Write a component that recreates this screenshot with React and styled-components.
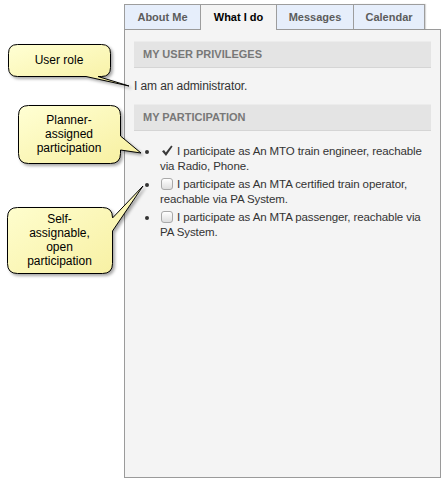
import React from 'react';
import styled, { createGlobalStyle } from 'styled-components';

const Global = createGlobalStyle`
  html, body { margin: 0; padding: 0; background: #fff; }
  body { font-family: "Liberation Sans", Arial, sans-serif; }
`;

const Page = styled.div`
  position: relative;
  width: 443px;
  height: 480px;
  box-sizing: border-box;
  padding: 4px 0 0 124px;
`;

const Frame = styled.div`
  width: 317px;
  display: flex;
  flex-direction: column;
`;

const TabBar = styled.div`
  display: flex;
  align-items: flex-start;
  height: 26px;
  margin-bottom: -1px;
  position: relative;
  z-index: 1;
`;

const Tab = styled.div`
  box-sizing: border-box;
  width: ${p => p.$w}px;
  height: ${p => (p.$active ? 26 : 25)}px;
  margin-left: ${p => (p.$first ? 0 : -1)}px;
  border: 1px solid #9d9d9d;
  border-bottom: none;
  background: ${p => (p.$active ? '#f4f4f4' : '#e6eefb')};
  color: ${p => (p.$active ? '#000' : '#5c5c5c')};
  font: bold 11px/24px "Liberation Sans", Arial, sans-serif;
  text-align: center;
  white-space: nowrap;
  box-shadow: ${p => (p.$last ? '1px 0 1px rgba(0,0,0,0.15)' : 'none')};
`;

const Panel = styled.div`
  box-sizing: border-box;
  height: 449px;
  border: 1px solid #9a9a9a;
  background: #f4f4f4;
  padding: 11px 9px;
`;

const SectionHeader = styled.div`
  box-sizing: border-box;
  height: 27px;
  background: #e4e4e4;
  border-top: 1px solid #ececec;
  border-bottom: 1px solid #d5d5d5;
  padding-left: 9px;
  font: bold 11px/25px "Liberation Sans", Arial, sans-serif;
  color: #787878;
  text-transform: uppercase;
`;

const Role = styled.p`
  margin: 11px 0 10px;
  font: 12px/15px "Liberation Sans", Arial, sans-serif;
  letter-spacing: -0.1px;
  color: #333;
`;

const List = styled.ul`
  list-style: none;
  margin: 13px 0 0;
  padding: 0 0 0 26px;
`;

const Item = styled.li`
  position: relative;
  font: 11.5px/15px "Liberation Sans", Arial, sans-serif;
  letter-spacing: -0.1px;
  color: #333;
  margin-bottom: 3px;
  &::before {
    content: '';
    position: absolute;
    left: -15px;
    top: 6px;
    width: 4px;
    height: 4px;
    border-radius: 50%;
    background: #333;
  }
`;

const Box = styled.span`
  display: inline-block;
  box-sizing: border-box;
  width: 12px;
  height: 12px;
  vertical-align: -2px;
  margin: 0 4px 0 1px;
  border: ${p => (p.$checked ? 'none' : '1px solid #a9a9a9')};
  border-radius: 3px;
  background: ${p => (p.$checked ? 'transparent' : 'linear-gradient(#ffffff, #dedede)')};
  svg { display: block; }
`;

const Overlay = styled.svg`
  position: absolute;
  left: 0;
  top: 0;
  width: 150px;
  height: 290px;
  filter: drop-shadow(2px 2px 1.5px rgba(0, 0, 0, 0.35));
  pointer-events: none;
`;

const Label = styled.div`
  position: absolute;
  left: ${p => p.$x}px;
  top: ${p => p.$y}px;
  width: ${p => p.$w}px;
  height: ${p => p.$h}px;
  display: flex;
  align-items: center;
  justify-content: center;
  text-align: center;
  font: 12px/14px "Liberation Sans", Arial, sans-serif;
  color: #000;
`;

const tabs = [
  { label: 'About Me', w: 77 },
  { label: 'What I do', w: 77, active: true },
  { label: 'Messages', w: 78 },
  { label: 'Calendar', w: 72 },
];

const items = [
  { checked: true, text: 'I participate as An MTO train engineer, reachable via Radio, Phone.' },
  { checked: false, text: 'I participate as An MTA certified train operator, reachable via PA System.' },
  { checked: false, text: 'I participate as An MTA passenger, reachable via PA System.' },
];

const balloons = [
  'M17.5 44.5 H101.5 Q110.5 44.5 110.5 53.5 V67.5 Q110.5 76.5 101.5 76.5 H98 L129 86 L86 76.5 H17.5 Q8.5 76.5 8.5 67.5 V53.5 Q8.5 44.5 17.5 44.5 Z',
  'M28.5 105.5 H110.5 Q120.5 105.5 120.5 115.5 V136 L141 153 L120.5 150 V153.5 Q120.5 163.5 110.5 163.5 H28.5 Q18.5 163.5 18.5 153.5 V115.5 Q18.5 105.5 28.5 105.5 Z',
  'M17.5 207.5 H102.5 Q112.5 207.5 112.5 217.5 V218 L143 186 L112.5 231 V263.5 Q112.5 273.5 102.5 273.5 H17.5 Q7.5 273.5 7.5 263.5 V217.5 Q7.5 207.5 17.5 207.5 Z',
];

const labels = [
  { x: 8, y: 44, w: 102, h: 32, lines: ['User role'] },
  { x: 18, y: 105, w: 102, h: 58, lines: ['Planner-', 'assigned', 'participation'] },
  { x: 7, y: 207, w: 105, h: 66, lines: ['Self-', 'assignable,', 'open', 'participation'] },
];

function Check() {
  return (
    <svg width="12" height="12" viewBox="0 0 12 12">
      <path d="M1 6.2 L3 5 L4.8 7.6 L10.2 0.6 L11.6 1.6 L5 11 Z" fill="#3a3a3a" />
    </svg>
  );
}

export default function App() {
  return (
    <>
      <Global />
      <Page>
        <Frame>
          <TabBar>
            {tabs.map((t, i) => (
              <Tab key={t.label} $w={t.w} $active={t.active} $first={i === 0} $last={i === tabs.length - 1}>
                {t.label}
              </Tab>
            ))}
          </TabBar>
          <Panel>
            <SectionHeader>My user privileges</SectionHeader>
            <Role>I am an administrator.</Role>
            <SectionHeader>My participation</SectionHeader>
            <List>
              {items.map((it, i) => (
                <Item key={i}>
                  <Box $checked={it.checked}>{it.checked && <Check />}</Box>
                  {it.text}
                </Item>
              ))}
            </List>
          </Panel>
        </Frame>
        <Overlay viewBox="0 0 150 290">
          <defs>
            <linearGradient id="yel" x1="0" y1="0" x2="1" y2="1">
              <stop offset="0" stopColor="#ffffd4" />
              <stop offset="1" stopColor="#f7ef9e" />
            </linearGradient>
          </defs>
          {balloons.map((d, i) => (
            <path key={i} d={d} fill="url(#yel)" stroke="#000" strokeWidth="1" />
          ))}
        </Overlay>
        {labels.map((l, i) => (
          <Label key={i} $x={l.x} $y={l.y} $w={l.w} $h={l.h}>
            <div>
              {l.lines.map((ln, j) => (
                <div key={j}>{ln}</div>
              ))}
            </div>
          </Label>
        ))}
      </Page>
    </>
  );
}
